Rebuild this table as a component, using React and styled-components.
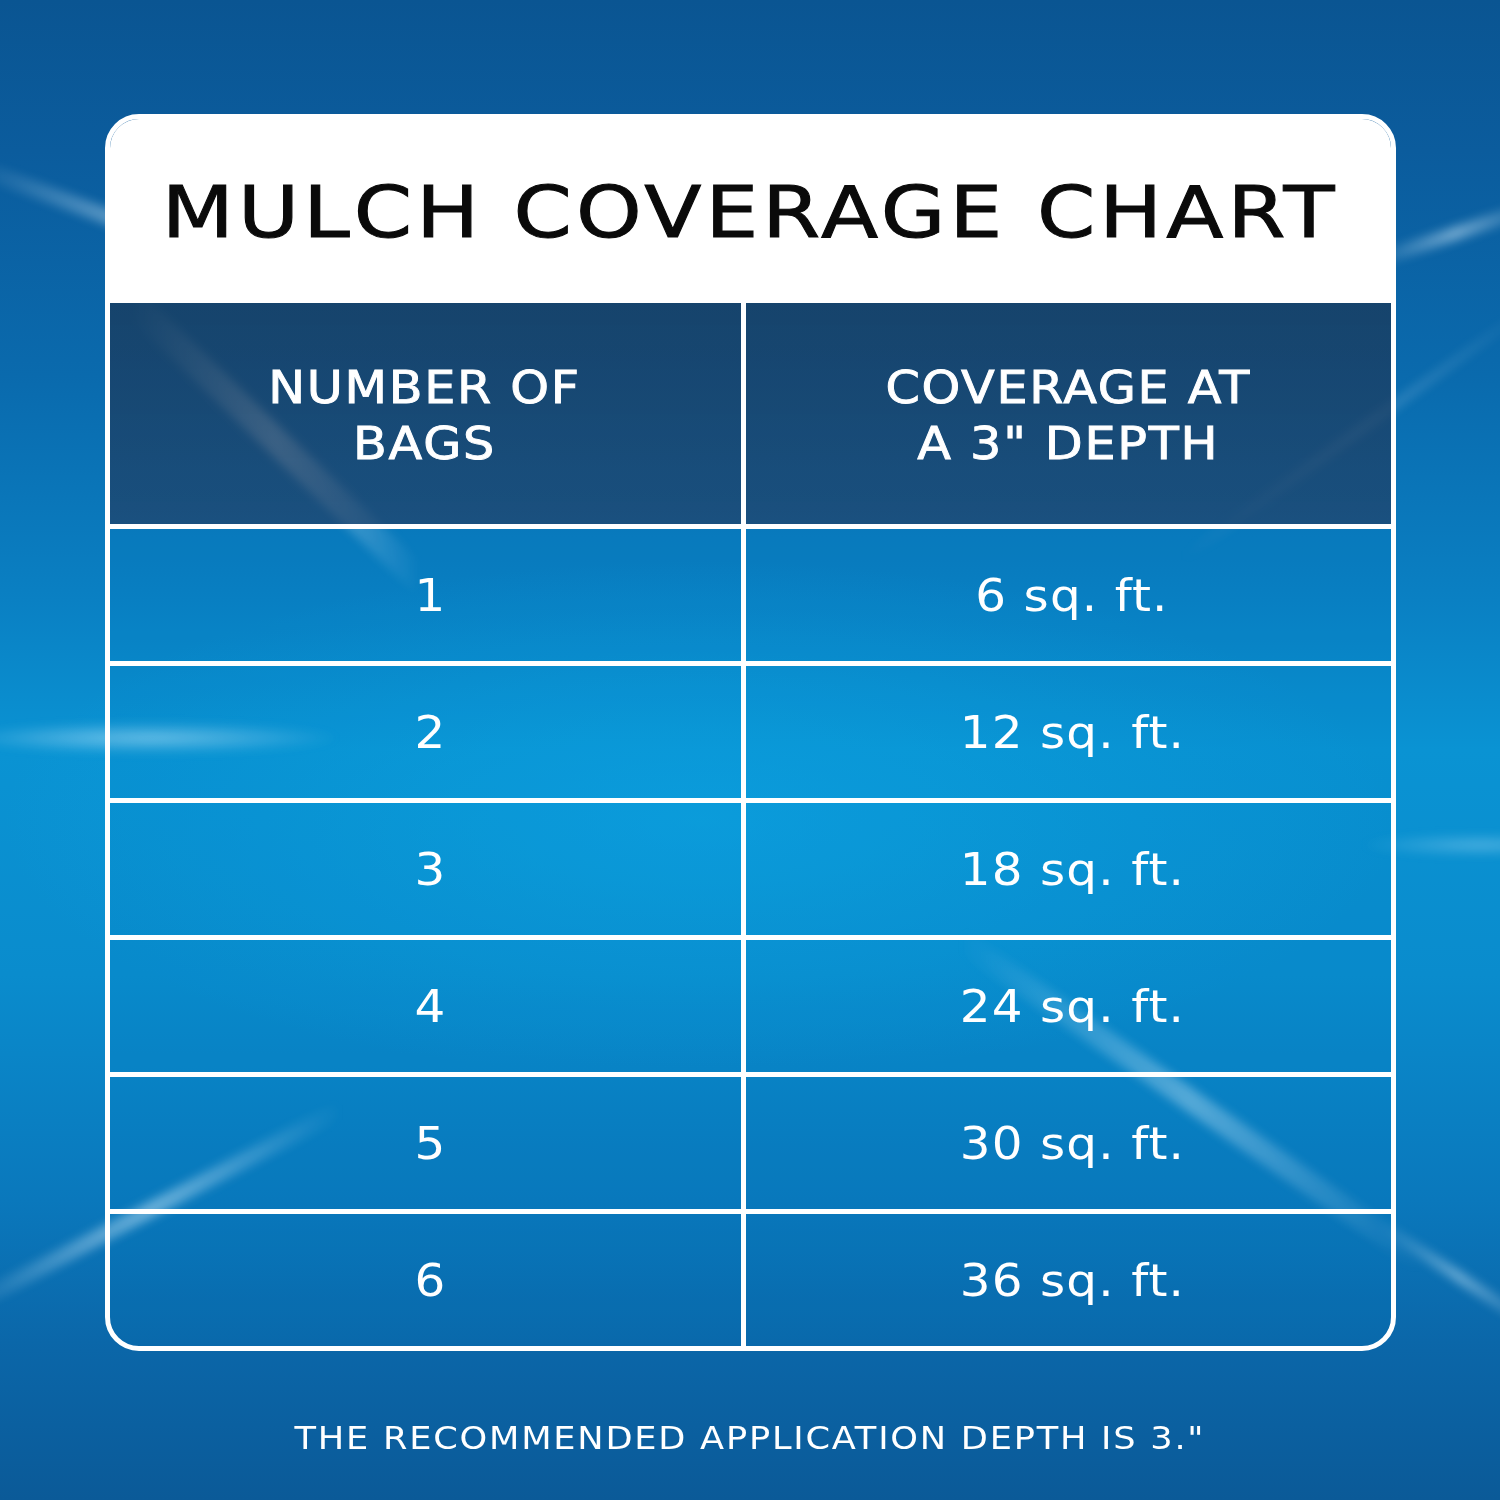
import React from 'react';
import styled, { createGlobalStyle } from 'styled-components';

const rows = [
    { bags: '1', coverage: '6 sq. ft.' },
    { bags: '2', coverage: '12 sq. ft.' },
    { bags: '3', coverage: '18 sq. ft.' },
    { bags: '4', coverage: '24 sq. ft.' },
    { bags: '5', coverage: '30 sq. ft.' },
    { bags: '6', coverage: '36 sq. ft.' },
];

// light streaks of the backdrop: [x1, y1, x2, y2, width, opacity]
const streaks = [
    [-30, 165, 330, 300, 16, 0.45],
    [130, 300, 420, 580, 26, 0.55],
    [-40, 1310, 340, 1110, 16, 0.5],
    [1370, 262, 1540, 205, 14, 0.45],
    [1180, 560, 1540, 300, 10, 0.18],
    [960, 940, 1420, 1260, 22, 0.4],
    [1380, 1225, 1540, 1330, 12, 0.4],
];

function Backdrop() {
    return (
        <Streaks viewBox="0 0 1500 1500" preserveAspectRatio="none">
            <defs>
                <linearGradient id="fade" x1="0" y1="0" x2="1" y2="0">
                    <stop offset="0" stopColor="#dff4ff" stopOpacity="0" />
                    <stop offset="0.5" stopColor="#dff4ff" stopOpacity="1" />
                    <stop offset="1" stopColor="#dff4ff" stopOpacity="0" />
                </linearGradient>
                <radialGradient id="flare">
                    <stop offset="0" stopColor="#c8efff" stopOpacity="0.55" />
                    <stop offset="1" stopColor="#c8efff" stopOpacity="0" />
                </radialGradient>
                <radialGradient id="glow">
                    <stop offset="0" stopColor="#10b4f0" stopOpacity="0.45" />
                    <stop offset="1" stopColor="#10b4f0" stopOpacity="0" />
                </radialGradient>
                <filter id="soft" x="-20%" y="-20%" width="140%" height="140%">
                    <feGaussianBlur stdDeviation="5" />
                </filter>
            </defs>
            <ellipse cx="700" cy="820" rx="700" ry="260" fill="url(#glow)" />
            <g filter="url(#soft)">
                {streaks.map(([x1, y1, x2, y2, w, o], i) => (
                    <line key={i} x1={x1} y1={y1} x2={x2} y2={y2}
                        stroke="url(#fade)" strokeWidth={w} strokeOpacity={o} strokeLinecap="round" />
                ))}
                <ellipse cx="150" cy="738" rx="190" ry="16" fill="url(#flare)" />
                <ellipse cx="1480" cy="845" rx="120" ry="12" fill="url(#flare)" opacity="0.6" />
            </g>
        </Streaks>
    );
}

function App() {
    return (
        <Page>
            <GlobalStyle />
            <Backdrop />
            <Content>
                <Card>
                    <Title><Stretch scale={1.16}>MULCH COVERAGE CHART</Stretch></Title>
                    <HeadRow>
                        <HeadCell first><Stretch scale={1.12}>NUMBER OF<br />BAGS</Stretch></HeadCell>
                        <HeadCell><Stretch scale={1.12}>COVERAGE AT<br />A 3" DEPTH</Stretch></HeadCell>
                    </HeadRow>
                    {rows.map((r) => (
                        <Row key={r.bags}>
                            <Cell first><Stretch scale={1.1}>{r.bags}</Stretch></Cell>
                            <Cell><Stretch scale={1.1}>{r.coverage}</Stretch></Cell>
                        </Row>
                    ))}
                </Card>
                <Footnote><Stretch scale={1.1}>THE RECOMMENDED APPLICATION DEPTH IS 3."</Stretch></Footnote>
            </Content>
        </Page>
    );
}

export default App;

const GlobalStyle = createGlobalStyle`
    html, body {
        margin: 0;
        padding: 0;
        background: #0b5a98;
    }
`;

const Page = styled.div`
    width: 1500px;
    height: 1500px;
    display: grid;
    overflow: hidden;
    font-family: "DejaVu Sans", "Liberation Sans", sans-serif;
    background: linear-gradient(180deg,
        #0a5592 0%, #0b5c9d 10%, #0a6aad 25%, #0a80c3 40%,
        #0a93d3 50%, #0a8ccd 65%, #0a78bc 80%, #0b66a8 90%, #0b5a98 100%);
`;

const Streaks = styled.svg`
    grid-area: 1 / 1;
    width: 1500px;
    height: 1500px;
`;

const Content = styled.div`
    grid-area: 1 / 1;
    display: flex;
    flex-direction: column;
    align-items: center;
    padding-top: 114px;
`;

const Stretch = styled.span`
    display: inline-block;
    transform: scaleX(${(p) => p.scale});
    white-space: nowrap;
`;

const Card = styled.div`
    width: 1291px;
    box-sizing: border-box;
    border: 5px solid #ffffff;
    border-radius: 34px;
    overflow: hidden;
    display: flex;
    flex-direction: column;
`;

const Title = styled.div`
    height: 184px;
    box-sizing: border-box;
    padding-top: 2px;
    background: #ffffff;
    color: #0a0a0a;
    font-size: 72px;
    letter-spacing: 3.5px;
    -webkit-text-stroke: 1px #0a0a0a;
    display: flex;
    align-items: center;
    justify-content: center;
`;

const HeadRow = styled.div`
    display: grid;
    grid-template-columns: 636px 1fr;
    height: 221px;
    background: linear-gradient(180deg, rgba(27, 55, 85, 0.72) 0%, rgba(33, 63, 101, 0.7) 100%);
`;

const HeadCell = styled.div`
    display: flex;
    align-items: center;
    justify-content: center;
    text-align: center;
    color: #ffffff;
    font-size: 44px;
    letter-spacing: 1.5px;
    line-height: 56px;
    padding-top: 4px;
    -webkit-text-stroke: 0.9px #ffffff;
    border-right: ${(p) => (p.first ? '5px solid #ffffff' : 'none')};
`;

const Row = styled.div`
    display: grid;
    grid-template-columns: 636px 1fr;
    height: 132px;
    border-top: 5px solid #ffffff;
    background: rgba(0, 120, 190, 0.12);
`;

const Cell = styled.div`
    display: flex;
    align-items: center;
    justify-content: center;
    color: #ffffff;
    font-size: 44px;
    letter-spacing: 1px;
    padding-left: ${(p) => (p.first ? '10px' : '8px')};
    border-right: ${(p) => (p.first ? '5px solid #ffffff' : 'none')};
`;

const Footnote = styled.div`
    margin-top: 68px;
    color: #ffffff;
    font-size: 32px;
    letter-spacing: 1.6px;
`;
